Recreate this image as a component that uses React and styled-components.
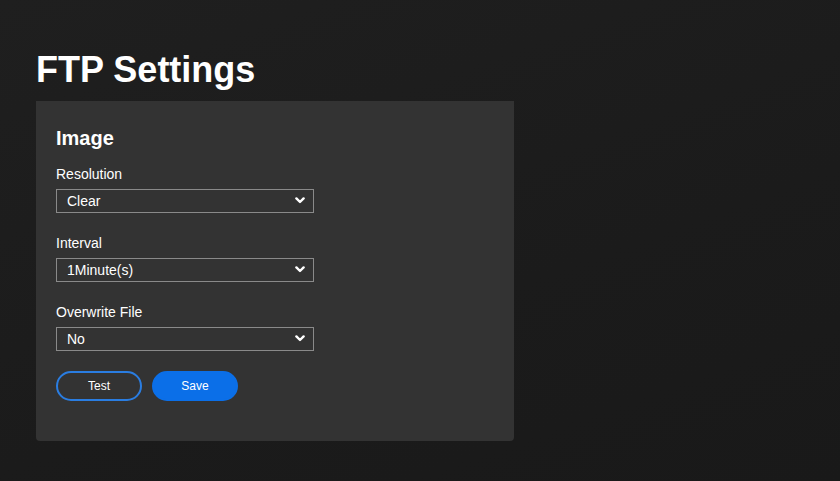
import { createGlobalStyle } from "styled-components";
import styled from "styled-components";

const GlobalStyle = createGlobalStyle`
  html, body {
    margin: 0;
    padding: 0;
    height: 100%;
  }
  body {
    background: linear-gradient(160deg, #1f1f1f 0%, #1b1b1b 60%, #191919 100%);
    font-family: "Liberation Sans", Arial, sans-serif;
    color: #fff;
  }
`;

const Page = styled.main`
  min-height: 481px;
  padding: 49px 36px 0;
  box-sizing: border-box;
`;

const Title = styled.h1`
  margin: 0 0 11px;
  font-size: 36px;
  line-height: 41px;
  font-weight: 700;
  color: #fff;
`;

const Panel = styled.section`
  width: 478px;
  box-sizing: border-box;
  padding: 26px 20px 40px;
  background-color: #333333;
  border-radius: 0 0 4px 4px;
`;

const SectionTitle = styled.h2`
  margin: 0 0 16px;
  font-size: 20px;
  line-height: 23px;
  font-weight: 700;
`;

const Fields = styled.div`
  display: flex;
  flex-direction: column;
  gap: 22px;
  margin-bottom: 20px;
`;

const Field = styled.div`
  display: flex;
  flex-direction: column;
  gap: 7px;
`;

const Label = styled.label`
  font-size: 14px;
  line-height: 16px;
  color: #fff;
`;

const SelectBox = styled.div`
  position: relative;
  width: 258px;
  height: 24px;
`;

const Select = styled.select`
  appearance: none;
  width: 100%;
  height: 100%;
  margin: 0;
  padding: 0 28px 0 10px;
  box-sizing: border-box;
  background-color: #333333;
  border: 1px solid #8a8a8a;
  border-radius: 0;
  color: #fff;
  font-family: "Liberation Sans", Arial, sans-serif;
  font-size: 14px;
  outline: none;
`;

const Chevron = styled.svg`
  position: absolute;
  right: 9px;
  top: 8px;
  width: 10px;
  height: 7px;
  pointer-events: none;
`;

const Buttons = styled.div`
  display: flex;
  gap: 10px;
`;

const Button = styled.button`
  width: 86px;
  height: 30px;
  box-sizing: border-box;
  border-radius: 15px;
  border: 2px solid ${({ $primary }) => ($primary ? "#0b6fe8" : "#2a7de1")};
  background-color: ${({ $primary }) => ($primary ? "#0b6fe8" : "transparent")};
  color: #fff;
  font-family: "Liberation Sans", Arial, sans-serif;
  font-size: 12px;
  cursor: pointer;
`;

const fields = [
  { id: "resolution", label: "Resolution", value: "Clear", options: ["Clear", "Fluent"] },
  { id: "interval", label: "Interval", value: "1Minute(s)", options: ["1Minute(s)", "5Minute(s)", "10Minute(s)"] },
  { id: "overwrite", label: "Overwrite File", value: "No", options: ["No", "Yes"] },
];

function SelectField({ id, label, value, options }) {
  return (
    <Field>
      <Label htmlFor={id}>{label}</Label>
      <SelectBox>
        <Select id={id} defaultValue={value}>
          {options.map((o) => (
            <option key={o} value={o}>{o}</option>
          ))}
        </Select>
        <Chevron viewBox="0 0 10 7">
          <path d="M1.4 1.4 L5 5 L8.6 1.4" fill="none" stroke="#fff" strokeWidth="2.4" strokeLinecap="round" strokeLinejoin="round" />
        </Chevron>
      </SelectBox>
    </Field>
  );
}

export default function App() {
  return (
    <>
      <GlobalStyle />
      <Page>
        <Title>FTP Settings</Title>
        <Panel>
          <SectionTitle>Image</SectionTitle>
          <Fields>
            {fields.map((f) => (
              <SelectField key={f.id} {...f} />
            ))}
          </Fields>
          <Buttons>
            <Button type="button">Test</Button>
            <Button type="button" $primary>Save</Button>
          </Buttons>
        </Panel>
      </Page>
    </>
  );
}
